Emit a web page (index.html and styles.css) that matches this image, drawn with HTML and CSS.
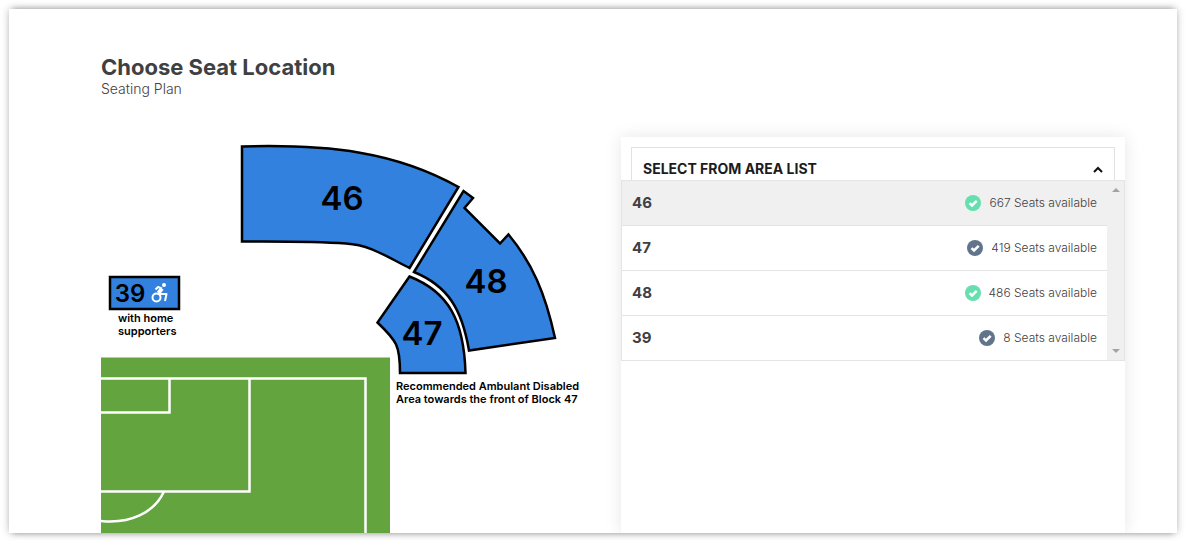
FILE: index.html
```html
<!DOCTYPE html>
<html lang="en">
<head>
<meta charset="utf-8">
<meta name="viewport" content="width=device-width, initial-scale=1">
<title>Choose Seat Location</title>
<link rel="stylesheet" href="styles.css">
</head>
<body>
<main class="page">
  <header class="heading">
    <h1 class="title">Choose Seat Location</h1>
    <p class="subtitle">Seating Plan</p>
  </header>
  <div class="columns">
    <svg class="map" viewBox="101 137 520 396" role="img" aria-label="Stadium seating plan">
      <g class="pitch">
        <rect class="grass" x="101" y="357.500" width="289" height="176"/>
        <path class="line" d="M101 378.500H365.500V534M101 412.500H169.500V378.500M101 491.500H249.500V378.500M101 521C130 524 154 513 164 491.500"/>
      </g>
      <g class="block">
        <path d="M242 146.500C330 144 396 152 458.500 187L409.500 268C387 257 371 245 346 243.500C312 241 276 241.500 242 241.500Z"/>
        <path d="M463.500 191L473 198L464.500 208L500 243.500L508.500 234.500C532 263 545 292 555 338L469 350.500C462 309 448 286 414 272Z"/>
        <path d="M409.500 276.500L377.500 322.500C397 341 400 346 400 373H465.500C464 321 449 292 409.500 276.500Z"/>
        <rect x="110" y="277" width="69" height="32"/>
      </g>
      <g class="number">
        <text x="342" y="210">46</text>
        <text x="486" y="293">48</text>
        <text x="422" y="345">47</text>
        <text class="number-small" x="130" y="302">39</text>
      </g>
      <g class="chair">
        <circle class="chair-head" cx="164" cy="285" r="2"/>
        <path d="M155.500 289.500L158 287L162 288.500"/>
        <path class="chair-torso" d="M162 288.500L158.500 293"/>
        <path d="M158.500 294H166.500L165 301"/>
        <circle cx="156.500" cy="297.500" r="4"/>
      </g>
      <g class="caption">
        <text x="118" y="322">with home</text>
        <text x="118" y="335">supporters</text>
        <text x="396" y="390">Recommended Ambulant Disabled</text>
        <text x="396" y="403">Area towards the front of Block 47</text>
      </g>
    </svg>
    <section class="panel">
      <button class="toggle" type="button" aria-expanded="true" aria-controls="areas">
        <span>SELECT FROM AREA LIST</span>
        <svg class="chevron" viewBox="0 0 10 8" aria-hidden="true"><path d="M1 7L5 3L9 7"/></svg>
      </button>
      <div class="menu" id="areas">
        <ul class="areas">
          <li><button class="area selected" type="button"><b>46</b><span class="seats"><svg class="tick green" viewBox="0 0 16 16" aria-hidden="true"><circle cx="8" cy="8" r="8"/><path d="M4.500 8.200L7 10.500L11.700 5.800"/></svg>667 Seats available</span></button></li>
          <li><button class="area" type="button"><b>47</b><span class="seats"><svg class="tick" viewBox="0 0 16 16" aria-hidden="true"><circle cx="8" cy="8" r="8"/><path d="M4.500 8.200L7 10.500L11.700 5.800"/></svg>419 Seats available</span></button></li>
          <li><button class="area" type="button"><b>48</b><span class="seats"><svg class="tick green" viewBox="0 0 16 16" aria-hidden="true"><circle cx="8" cy="8" r="8"/><path d="M4.500 8.200L7 10.500L11.700 5.800"/></svg>486 Seats available</span></button></li>
          <li><button class="area" type="button"><b>39</b><span class="seats"><svg class="tick" viewBox="0 0 16 16" aria-hidden="true"><circle cx="8" cy="8" r="8"/><path d="M4.500 8.200L7 10.500L11.700 5.800"/></svg>8 Seats available</span></button></li>
        </ul>
        <div class="track" aria-hidden="true">
          <svg class="arrow" viewBox="0 0 8 4"><path d="M0 4L4 0L8 4Z"/></svg>
          <svg class="arrow" viewBox="0 0 8 4"><path d="M0 0L4 4L8 0Z"/></svg>
        </div>
      </div>
    </section>
  </div>
</main>
</body>
</html>
```
FILE: styles.css
```css
* { box-sizing: border-box; }

body {
  margin: 0;
  padding: 9px 8px 8px 9px;
  height: 100vh;
  background: #fff;
  color: #3f4042;
  font-family: Inter, "Liberation Sans", sans-serif;
}

.page {
  display: flex;
  flex-direction: column;
  height: 100%;
  padding: 44px 52px 0 92px;
  overflow: hidden;
  background: #fff;
  box-shadow:
    0 0 8px rgba(0, 0, 0, 0.24),
    0 4px 6px -4px rgba(0, 0, 0, 0.3),
    0 -4px 6px -4px rgba(0, 0, 0, 0.3);
}

.title {
  margin: 0;
  font-size: 22px;
  line-height: 28px;
  font-weight: 700;
}

.subtitle {
  margin: 0;
  font-size: 14px;
  line-height: 16px;
  font-weight: 300;
}

.columns {
  display: grid;
  grid-template-columns: 65fr 63fr;
  flex: 1;
  margin-top: 40px;
}

.map {
  display: block;
  width: 100%;
}

.grass { fill: #63a43f; }
.line { fill: none; stroke: #fff; stroke-width: 2.500; }
.block { fill: #3281df; stroke: #000; stroke-width: 2.500; }
.number { fill: #000; font-size: 33px; font-weight: 600; text-anchor: middle; }
.number-small { font-size: 24px; }
.caption { fill: #000; font-size: 11px; font-weight: 600; }
.chair { fill: none; stroke: #fff; stroke-width: 2; stroke-linejoin: round; }
.chair-head { fill: #fff; stroke: none; }
.chair-torso { stroke-width: 4; }

.panel {
  position: relative;
  padding: 10px;
  background: #fff;
  box-shadow: 0 0 16px rgba(0, 0, 0, 0.1);
}

.toggle {
  display: flex;
  align-items: center;
  justify-content: space-between;
  width: 100%;
  height: 44px;
  padding: 0 11px;
  border: 1px solid #e2e2e2;
  background: #fff;
  color: #1c1c1e;
  font: 700 14px/20px Inter, "Liberation Sans", sans-serif;
}

.chevron {
  width: 10px;
  height: 8px;
  fill: none;
  stroke: #111;
  stroke-width: 2;
}

.menu {
  position: absolute;
  top: 43px;
  left: 0;
  right: 0;
  display: flex;
  border: 1px solid #e4e4e4;
  background: #fff;
}

.areas {
  flex: 1;
  margin: 0;
  padding: 0;
  list-style: none;
}

.area {
  display: flex;
  align-items: center;
  justify-content: space-between;
  width: 100%;
  height: 45px;
  padding: 0 10px;
  border: 0;
  border-bottom: 1px solid #e4e4e4;
  background: #fff;
  color: #3f4042;
  font: 300 12px/20px Inter, "Liberation Sans", sans-serif;
}

.area b { font-size: 15px; font-weight: 700; }
.selected { background: #f0f0f0; }
li:last-child .area { height: 44px; border-bottom: 0; }

.seats {
  display: flex;
  align-items: center;
  gap: 8px;
}

.tick { width: 16px; height: 16px; fill: #62748b; }
.tick path { fill: none; stroke: #fff; stroke-width: 2.500; }
.green { fill: #66dfaf; }

.track {
  display: flex;
  flex-direction: column;
  align-items: center;
  justify-content: space-between;
  width: 17px;
  padding: 7px 0;
  background: #f0f0f0;
}

.arrow { width: 8px; height: 4px; fill: #a3a3a3; }
```
